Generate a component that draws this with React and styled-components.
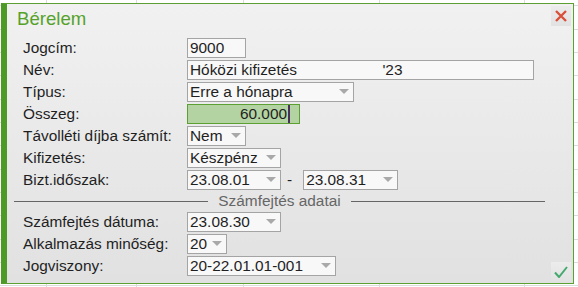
import React from "react";
import styled, { createGlobalStyle } from "styled-components";

const Global = createGlobalStyle`
  html, body { margin: 0; padding: 0; background: #fff; }
  body { font-family: "Liberation Sans", Arial, sans-serif; }
`;

const Sheet = styled.div`
  width: 578px;
  height: 287px;
  box-sizing: border-box;
  padding: 3px 0 0 1px;
  background-color: #fff;
  background-image:
    linear-gradient(to right, transparent 46px, #dcdcdc 46px, #dcdcdc 47px, transparent 47px),
    linear-gradient(to right, transparent 136px, #dcdcdc 136px, #dcdcdc 137px, transparent 137px),
    linear-gradient(to right, transparent 243px, #dcdcdc 243px, #dcdcdc 244px, transparent 244px),
    linear-gradient(to right, transparent 379px, #dcdcdc 379px, #dcdcdc 380px, transparent 380px),
    linear-gradient(to right, transparent 524px, #dcdcdc 524px, #dcdcdc 525px, transparent 525px),
    repeating-linear-gradient(to bottom, transparent 0, transparent 5.33px, #dcdcdc 5.33px, #dcdcdc 6.33px, transparent 6.33px, transparent 23.33px);
`;

const Dialog = styled.div`
  width: 573px;
  height: 281px;
  box-sizing: border-box;
  border: 1px solid #5c9f33;
  border-left: 6px solid #4e9a26;
  background: linear-gradient(to bottom, #f1f1f1, #e1e1e1);
  display: flex;
  flex-direction: column;
  color: #1f1f1f;
  font-size: 15.4px;
`;

const Header = styled.div`
  height: 34px;
  display: flex;
  justify-content: space-between;
  align-items: flex-start;
  padding: 2px 2px 0 10px;
  box-sizing: border-box;
`;

const Title = styled.div`
  color: #55a22b;
  font-size: 18.6px;
  line-height: 22px;
  margin-top: 2px;
`;

const IconButton = styled.div`
  width: 20px;
  height: 20px;
  background: linear-gradient(to bottom, #ececec, #e2e2e2);
  display: flex;
  align-items: center;
  justify-content: center;
`;

const FormGrid = styled.div`
  display: grid;
  grid-template-columns: 164px 1fr;
  grid-auto-rows: 20px;
  row-gap: 2px;
  padding-left: 16px;
`;

const Label = styled.div`
  line-height: 20px;
  white-space: nowrap;
`;

const Controls = styled.div`
  display: flex;
  align-items: center;
`;

const Box = styled.div`
  width: ${(p) => p.$w}px;
  height: 20px;
  box-sizing: border-box;
  border: 1px solid #a4a4a4;
  background: #f8f8f8;
  line-height: 18px;
  padding-left: 2px;
  white-space: pre;
  position: relative;
  overflow: hidden;
`;

const Arrow = styled.span`
  position: absolute;
  right: 4px;
  top: 6px;
  width: 0;
  height: 0;
  border-left: 5.5px solid transparent;
  border-right: 5.5px solid transparent;
  border-top: 5px solid #a9a9a9;
`;

const AmountBox = styled.div`
  width: 113px;
  height: 20px;
  box-sizing: border-box;
  border: 1px solid #5c9f33;
  background: #b4d3a3;
  line-height: 18px;
  display: flex;
  justify-content: flex-end;
  align-items: center;
  padding-right: 9px;
`;

const Caret = styled.span`
  width: 2px;
  height: 18px;
  background: #4a2f5c;
  margin-left: 1px;
`;

const Dash = styled.span`
  padding: 0 11px 0 6px;
  line-height: 20px;
`;

const Separator = styled.div`
  height: 22px;
  display: flex;
  align-items: center;
  gap: 10px;
  margin: 0 28px 0 7px;
  color: #666;
  line-height: 20px;
  &::before, &::after {
    content: "";
    flex: 1;
    height: 1px;
    background: #666;
  }
`;

const BottomArea = styled.div`
  display: flex;
  justify-content: space-between;
  align-items: flex-end;
  padding: 0 2px 1px 0;
`;

const BottomGrid = styled(FormGrid)`
  margin-bottom: 6px;
`;

function Select({ w, children }) {
  return (
    <Box $w={w}>
      {children}
      <Arrow />
    </Box>
  );
}

export default function App() {
  return (
    <>
      <Global />
      <Sheet>
        <Dialog>
          <Header>
            <Title>Bérelem</Title>
            <IconButton>
              <svg width="12" height="12" viewBox="0 0 12 12">
                <path d="M1 1 L11 11 M11 1 L1 11" stroke="#d9503a" strokeWidth="2.4" strokeLinecap="butt" />
              </svg>
            </IconButton>
          </Header>
          <FormGrid>
            <Label>Jogcím:</Label>
            <Controls><Box $w={59}>9000</Box></Controls>
            <Label>Név:</Label>
            <Controls><Box $w={347}>{"Hóközi kifizetés                    '23"}</Box></Controls>
            <Label>Típus:</Label>
            <Controls><Select w={167}>Erre a hónapra</Select></Controls>
            <Label>Összeg:</Label>
            <Controls><AmountBox>60.000<Caret /></AmountBox></Controls>
            <Label>Távolléti díjba számít:</Label>
            <Controls><Select w={59}>Nem</Select></Controls>
            <Label>Kifizetés:</Label>
            <Controls><Select w={94}>Készpénz</Select></Controls>
            <Label>Bizt.időszak:</Label>
            <Controls>
              <Select w={94}>23.08.01</Select>
              <Dash>-</Dash>
              <Select w={95}>23.08.31</Select>
            </Controls>
          </FormGrid>
          <Separator>Számfejtés adatai</Separator>
          <BottomArea>
            <BottomGrid>
              <Label>Számfejtés dátuma:</Label>
              <Controls><Select w={94}>23.08.30</Select></Controls>
              <Label>Alkalmazás minőség:</Label>
              <Controls><Select w={40}>20</Select></Controls>
              <Label>Jogviszony:</Label>
              <Controls><Select w={149}>20-22.01.01-001</Select></Controls>
            </BottomGrid>
            <IconButton>
              <svg width="14" height="12" viewBox="0 0 14 12">
                <path d="M1 6.5 L5 11 L13 1" fill="none" stroke="#45a96e" strokeWidth="2" />
              </svg>
            </IconButton>
          </BottomArea>
        </Dialog>
      </Sheet>
    </>
  );
}
